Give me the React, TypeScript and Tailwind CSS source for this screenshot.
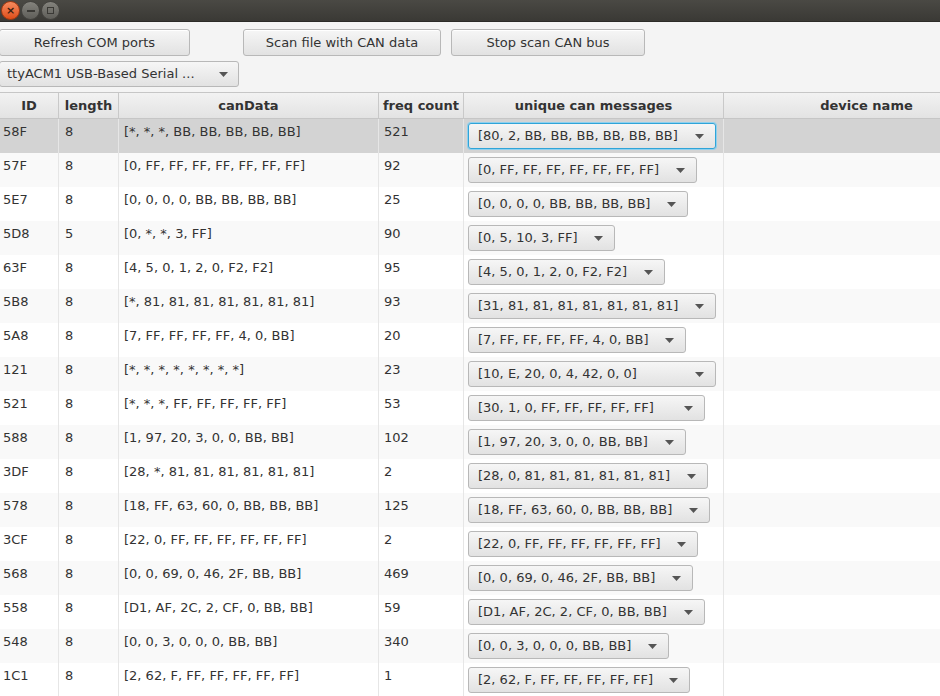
import React from "react";

type Row = { id: string; len: string; data: string; freq: string; msg: string; w: string };

const rows: Row[] = [
  { id: "58F", len: "8", data: "[*, *, *, BB, BB, BB, BB, BB]", freq: "521", msg: "[80, 2, BB, BB, BB, BB, BB, BB]", w: "w-[248px]" },
  { id: "57F", len: "8", data: "[0, FF, FF, FF, FF, FF, FF, FF]", freq: "92", msg: "[0, FF, FF, FF, FF, FF, FF, FF]", w: "w-[229px]" },
  { id: "5E7", len: "8", data: "[0, 0, 0, 0, BB, BB, BB, BB]", freq: "25", msg: "[0, 0, 0, 0, BB, BB, BB, BB]", w: "w-[220px]" },
  { id: "5D8", len: "5", data: "[0, *, *, 3, FF]", freq: "90", msg: "[0, 5, 10, 3, FF]", w: "w-[147px]" },
  { id: "63F", len: "8", data: "[4, 5, 0, 1, 2, 0, F2, F2]", freq: "95", msg: "[4, 5, 0, 1, 2, 0, F2, F2]", w: "w-[197px]" },
  { id: "5B8", len: "8", data: "[*, 81, 81, 81, 81, 81, 81, 81]", freq: "93", msg: "[31, 81, 81, 81, 81, 81, 81, 81]", w: "w-[248px]" },
  { id: "5A8", len: "8", data: "[7, FF, FF, FF, FF, 4, 0, BB]", freq: "20", msg: "[7, FF, FF, FF, FF, 4, 0, BB]", w: "w-[218px]" },
  { id: "121", len: "8", data: "[*, *, *, *, *, *, *, *]", freq: "23", msg: "[10, E, 20, 0, 4, 42, 0, 0]", w: "w-[248px]" },
  { id: "521", len: "8", data: "[*, *, *, FF, FF, FF, FF, FF]", freq: "53", msg: "[30, 1, 0, FF, FF, FF, FF, FF]", w: "w-[237px]" },
  { id: "588", len: "8", data: "[1, 97, 20, 3, 0, 0, BB, BB]", freq: "102", msg: "[1, 97, 20, 3, 0, 0, BB, BB]", w: "w-[218px]" },
  { id: "3DF", len: "8", data: "[28, *, 81, 81, 81, 81, 81, 81]", freq: "2", msg: "[28, 0, 81, 81, 81, 81, 81, 81]", w: "w-[240px]" },
  { id: "578", len: "8", data: "[18, FF, 63, 60, 0, BB, BB, BB]", freq: "125", msg: "[18, FF, 63, 60, 0, BB, BB, BB]", w: "w-[242px]" },
  { id: "3CF", len: "8", data: "[22, 0, FF, FF, FF, FF, FF, FF]", freq: "2", msg: "[22, 0, FF, FF, FF, FF, FF, FF]", w: "w-[230px]" },
  { id: "568", len: "8", data: "[0, 0, 69, 0, 46, 2F, BB, BB]", freq: "469", msg: "[0, 0, 69, 0, 46, 2F, BB, BB]", w: "w-[225px]" },
  { id: "558", len: "8", data: "[D1, AF, 2C, 2, CF, 0, BB, BB]", freq: "59", msg: "[D1, AF, 2C, 2, CF, 0, BB, BB]", w: "w-[237px]" },
  { id: "548", len: "8", data: "[0, 0, 3, 0, 0, 0, BB, BB]", freq: "340", msg: "[0, 0, 3, 0, 0, 0, BB, BB]", w: "w-[201px]" },
  { id: "1C1", len: "8", data: "[2, 62, F, FF, FF, FF, FF, FF]", freq: "1", msg: "[2, 62, F, FF, FF, FF, FF, FF]", w: "w-[222px]" },
];

const font = { fontFamily: '"DejaVu Sans", "Liberation Sans", sans-serif' };

function Arrow() {
  return (
    <svg width="9" height="5" viewBox="0 0 9 5" className="shrink-0">
      <path d="M0 0 L9 0 L4.5 5 Z" fill="#555" />
    </svg>
  );
}

function Btn({ children, w }: { children: React.ReactNode; w: string }) {
  return (
    <div
      className={`${w} h-[27px] flex items-center justify-center rounded-[3px] border border-[#b8b8b8] bg-gradient-to-b from-[#f6f6f6] to-[#e2e2e2] text-[13px] text-[#333] shadow-[inset_0_1px_0_#fff]`}
    >
      {children}
    </div>
  );
}

function Combo({ text, w, focused }: { text: string; w: string; focused?: boolean }) {
  return (
    <div
      className={`${w} h-[26px] flex items-center justify-between pl-[9px] pr-[11px] rounded-[3px] text-[13px] text-[#333] bg-gradient-to-b from-[#f6f6f6] to-[#e2e2e2] ${
        focused ? "border border-[#2fa4d8] shadow-[0_0_0_1px_#8fd0ee]" : "border border-[#b8b8b8]"
      }`}
    >
      <span className="whitespace-nowrap">{text}</span>
      <Arrow />
    </div>
  );
}

export default function App() {
  const cols = "grid grid-cols-[59px_60px_260px_85px_260px_286px]";
  return (
    <div className="w-[940px] h-[696px] overflow-hidden bg-[#f4f4f4] flex flex-col" style={font}>
      {/* title bar */}
      <div className="h-[22px] shrink-0 bg-gradient-to-b from-[#4a4944] to-[#3a3935] flex items-center gap-[1px] pl-[1px] border-b border-[#2c2b28]">
        <div className="w-[19px] h-[19px] rounded-full bg-gradient-to-b from-[#f58a5c] to-[#dd4d16] border border-[#a33a12] flex items-center justify-center text-[#3a2010] text-[11px] font-bold leading-none">
          ×
        </div>
        <div className="w-[19px] h-[19px] rounded-full bg-gradient-to-b from-[#84837d] to-[#5f5e59] border border-[#44433f] flex items-center justify-center">
          <div className="w-[8px] h-[2px] bg-[#3a3935]" />
        </div>
        <div className="w-[19px] h-[19px] rounded-full bg-gradient-to-b from-[#84837d] to-[#5f5e59] border border-[#44433f] flex items-center justify-center">
          <div className="w-[7px] h-[7px] border border-[#3a3935]" />
        </div>
      </div>

      {/* controls */}
      <div className="flex flex-col gap-[5px] pt-[7px]">
        <div className="flex items-center">
          <div className="-ml-[1px]">
            <Btn w="w-[191px]">Refresh COM ports</Btn>
          </div>
          <div className="ml-[53px]">
            <Btn w="w-[198px]">Scan file with CAN data</Btn>
          </div>
          <div className="ml-[10px]">
            <Btn w="w-[194px]">Stop scan CAN bus</Btn>
          </div>
        </div>
        <div className="-ml-[1px]">
          <div className="w-[240px] h-[26px] flex items-center justify-between pl-[7px] pr-[10px] rounded-[3px] border border-[#b8b8b8] bg-gradient-to-b from-[#f6f6f6] to-[#e2e2e2] text-[13px] text-[#333]">
            <span>ttyACM1 USB-Based Serial ...</span>
            <Arrow />
          </div>
        </div>
      </div>

      {/* table */}
      <div className="mt-[5px] border-t border-[#c6c6c6] flex-1 bg-white overflow-hidden">
        <div className={`${cols} h-[26px] bg-gradient-to-b from-[#f2f2f2] to-[#e3e3e3] border-b border-[#c6c6c6] text-[13px] font-bold text-[#333]`}>
          {["ID", "length", "canData", "freq count", "unique can messages", "device name"].map((h) => (
            <div key={h} className="flex items-center justify-center border-r border-[#c9c9c9] whitespace-nowrap pt-[1px]">
              {h}
            </div>
          ))}
        </div>
        {rows.map((r, i) => {
          const bg = i === 0 ? "bg-[#d3d3d3]" : i % 2 === 1 ? "bg-[#f9f9f9]" : "bg-white";
          return (
            <div key={i} className={`${cols} h-[34px] ${bg} text-[13px] text-[#333]`}>
              <div className="pl-[3px] pt-[3px] border-r border-[#e6e6e6]">{r.id}</div>
              <div className="pl-[6px] pt-[3px] border-r border-[#e6e6e6]">{r.len}</div>
              <div className="pl-[5px] pt-[3px] border-r border-[#e6e6e6] whitespace-nowrap">{r.data}</div>
              <div className="pl-[5px] pt-[3px] border-r border-[#e6e6e6]">{r.freq}</div>
              <div className="pl-[4px] flex items-center border-r border-[#e6e6e6]">
                <Combo text={r.msg} w={r.w} focused={i === 0} />
              </div>
              <div />
            </div>
          );
        })}
      </div>
    </div>
  );
}
